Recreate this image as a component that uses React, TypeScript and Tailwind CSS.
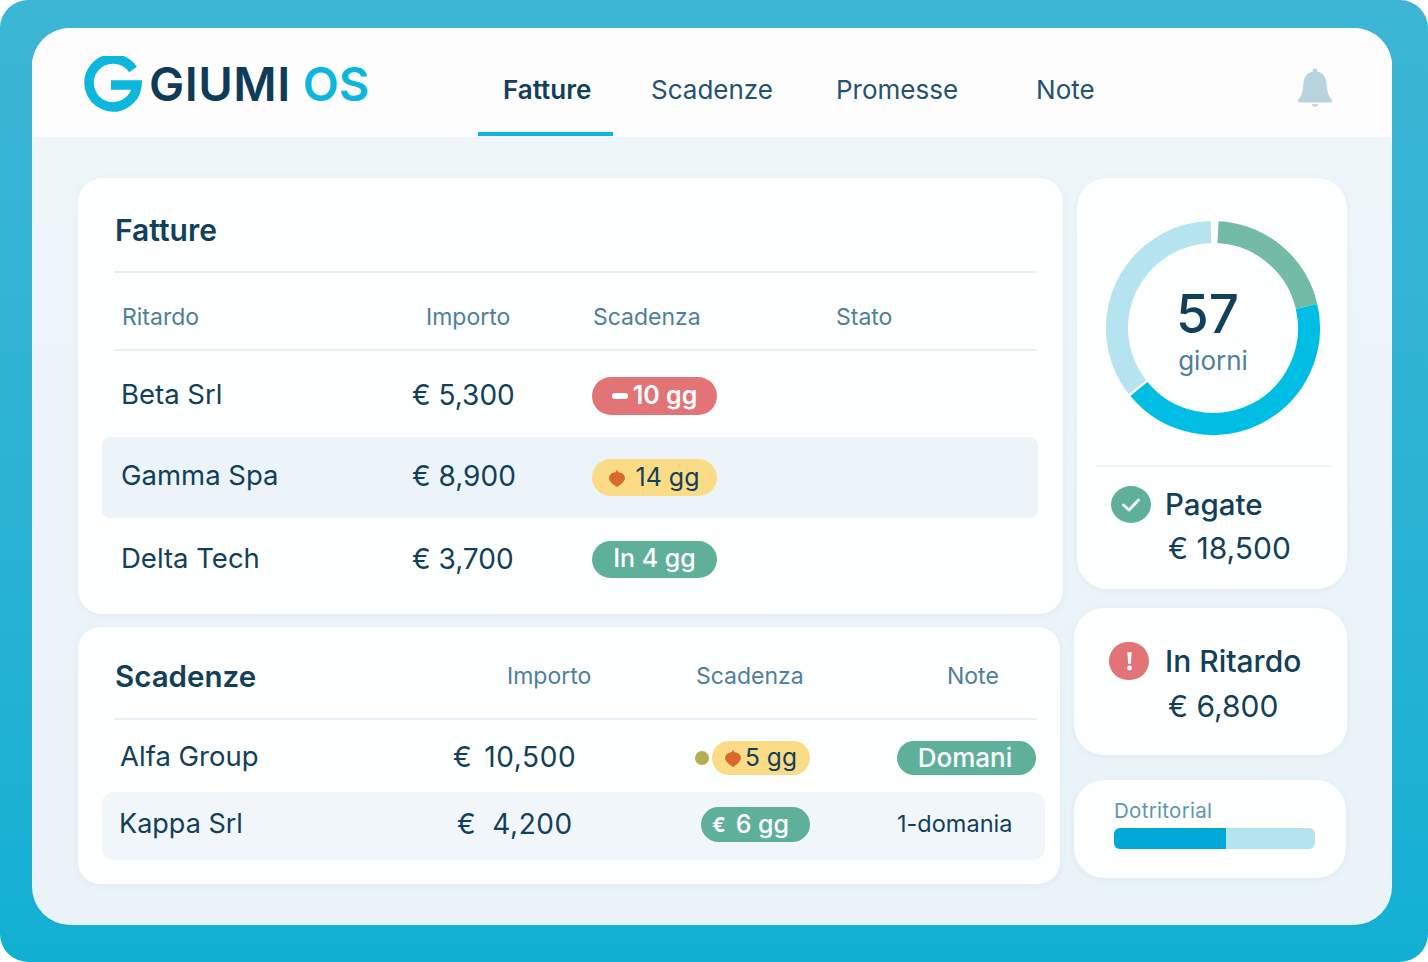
import React from "react";

const dark = "text-[#123f5a]";

function polar(a: number, r: number) {
  const t = ((a - 90) * Math.PI) / 180;
  return [108 + r * Math.cos(t), 108 + r * Math.sin(t)];
}
function arc(a0: number, a1: number, r = 96) {
  const [x0, y0] = polar(a0, r);
  const [x1, y1] = polar(a1, r);
  return `M${x0} ${y0}A${r} ${r} 0 ${a1 - a0 > 180 ? 1 : 0} 1 ${x1} ${y1}`;
}

function Flame({ className }: { className: string }) {
  return (
    <svg viewBox="0 0 16 18" className={className}>
      <path d="M8 0C8 2 9.500 3.200 11 3.600C14 4.400 16 6.500 16 9.200C16 12 12 15.500 8 18C4 15.500 0 12 0 9.200C0 6.500 2 4.400 5 3.600C6.500 3.200 8 2 8 0Z" fill="#d9692e" />
    </svg>
  );
}

function Pill({ className, children }: { className: string; children: React.ReactNode }) {
  return <div className={`flex items-center justify-center rounded-full ${className}`}>{children}</div>;
}

export default function App() {
  return (
    <div className="h-[962px] w-[1428px] overflow-hidden bg-white font-['Inter',sans-serif]">
      <div className="h-[962px] w-[1428px] rounded-[28px] bg-gradient-to-b from-[#3cb6d4] to-[#10b0d3] pb-[37px] pl-[32px] pr-[36px] pt-[28px]">
        <div className="flex h-[897px] w-[1360px] flex-col overflow-hidden rounded-[38px] bg-gradient-to-b from-[#eef6fa] to-[#e9f3f8]">
          {/* header */}
          <header className="flex h-[109px] shrink-0 bg-[#fdfdfe]">
            <div className="flex w-[446px] shrink-0 items-start pl-[52px] pt-[28px]">
              <svg viewBox="0 0 58 58" className="h-[58px] w-[58px] shrink-0">
                <path d="M49 13.500 A24 24 0 1 0 53 29 H27" fill="none" stroke="#0cb6dd" strokeWidth="9.500" />
              </svg>
              <span className="ml-[7px] mt-[5px] text-[47px] font-semibold leading-[46px] tracking-[0.5px] text-[#0e3c58]">GIUMI</span>
              <span className="ml-[12px] mt-[5px] text-[47px] font-semibold leading-[46px] text-[#0cb6dd]">OS</span>
            </div>
            <nav className="flex h-[108px] text-[26px] leading-[32px] text-[#24536e]">
              <div className="w-[135px] border-b-4 border-[#0fb5dc] pl-[25px] pt-[46px] font-semibold text-[#123f5a]">Fatture</div>
              <div className="ml-[38px] pt-[46px]">Scadenze</div>
              <div className="ml-[63px] pt-[46px]">Promesse</div>
              <div className="ml-[78px] pt-[46px]">Note</div>
            </nav>
            <div className="ml-auto mr-[59px] pt-[40px]">
              <svg viewBox="0 0 36 40" className="h-[40px] w-[36px]">
                <circle cx="18" cy="3" r="2.400" fill="#b9d3df" />
                <path d="M18 3.500C10 3.500 7 9 6.500 15C6 22 5 28 1.500 31.500C0.500 33 1 34.500 3 34.500H33C35 34.500 35.500 33 34.500 31.500C31 28 30 22 29.500 15C29 9 26 3.500 18 3.500Z" fill="#b9d3df" />
                <path d="M14.500 36.200H21.500C21 39.500 15 39.500 14.500 36.200Z" fill="#b9d3df" />
              </svg>
            </div>
          </header>

          {/* body */}
          <main className="flex items-start pl-[46px] pt-[41px]">
            <div className="flex w-[985px] shrink-0 flex-col gap-[13px]">
              {/* Fatture */}
              <section className="h-[436px] rounded-[24px] bg-[#fdfefe] pl-[36px] pr-[26px] shadow-[0_1px_6px_rgba(120,170,200,0.10)]">
                <h2 className={`flex h-[95px] items-center border-b-2 border-[#e6f0f6] pl-[1px] pt-[12px] text-[30px] font-semibold ${dark}`}>Fatture</h2>
                <div className="grid h-[78px] grid-cols-[304px_167px_243px_1fr] items-center border-b-2 border-[#e6f0f6] pl-[8px] pt-[12px] text-[23px] text-[#4f7f99]">
                  <div>Ritardo</div>
                  <div>Importo</div>
                  <div>Scadenza</div>
                  <div>Stato</div>
                </div>
                <div className={`grid h-[86px] grid-cols-[291px_180px_1fr] items-center pl-[7px] pt-[1px] ${dark}`}>
                  <div className="text-[27.5px]">Beta Srl</div>
                  <div className="text-[28px]">€ 5,300</div>
                  <Pill className="mt-[2px] h-[38px] w-[125px] gap-[5px] bg-[#e27376] text-[25px] font-semibold text-white">
                    <span className="h-[6px] w-[16px] rounded-[3px] bg-white" />
                    <span>10 gg</span>
                  </Pill>
                </div>
                <div className={`-ml-[12px] -mr-[1px] grid h-[81px] grid-cols-[291px_180px_1fr] items-center rounded-[8px] bg-[#ecf4f9] pl-[19px] ${dark}`}>
                  <div className="-mt-[3px] text-[27.5px]">Gamma Spa</div>
                  <div className="-mt-[3px] text-[28px]">€ 8,900</div>
                  <Pill className="h-[37px] w-[125px] gap-[10px] bg-[#fbdc86] text-[25px]">
                    <Flame className="h-[18px] w-[16px]" />
                    <span>14 gg</span>
                  </Pill>
                </div>
                <div className={`grid h-[82px] grid-cols-[291px_180px_1fr] items-center pl-[7px] ${dark}`}>
                  <div className="text-[27.5px]">Delta Tech</div>
                  <div className="text-[28px]">€ 3,700</div>
                  <Pill className="h-[37px] w-[125px] bg-[#5fb09a] text-[25px] font-medium text-white">In 4 gg</Pill>
                </div>
              </section>

              {/* Scadenze */}
              <section className="h-[257px] w-[982px] rounded-[22px] bg-[#fdfefe] pl-[36px] shadow-[0_1px_6px_rgba(120,170,200,0.10)]">
                <div className="mr-[23px] grid h-[93px] grid-cols-[393px_189px_251px_1fr] items-center border-b-2 border-[#e6f0f6] pt-[8px] text-[23px] text-[#4f7f99]">
                  <h2 className={`pl-[1px] text-[29.5px] font-semibold ${dark}`}>Scadenze</h2>
                  <div>Importo</div>
                  <div>Scadenza</div>
                  <div>Note</div>
                </div>
                <div className={`flex h-[72px] items-center pl-[6px] pt-[3px] ${dark}`}>
                  <div className="-mt-[2px] w-[333px] text-[27.5px]">Alfa Group</div>
                  <div className="-mt-[2px] w-[242px] text-[28px] tracking-[0.6px]">
                    <span className="mr-[12px]">€</span>10,500
                  </div>
                  <span className="h-[14px] w-[14px] rounded-full bg-[#b5ad55]" />
                  <Pill className="ml-[3px] h-[34px] w-[98px] gap-[4px] bg-[#fbdc86] text-[24.5px]">
                    <Flame className="h-[18px] w-[16px]" />
                    <span>5 gg</span>
                  </Pill>
                  <Pill className="ml-[87px] h-[34px] w-[139px] bg-[#5fb09a] pr-[3px] text-[26px] font-medium text-white">Domani</Pill>
                </div>
                <div className={`-ml-[12px] flex h-[68px] w-[943px] items-center rounded-[12px] bg-[#f0f6fa] pb-[3px] pl-[17px] ${dark}`}>
                  <div className="-mt-[1px] w-[338px] text-[27px]">Kappa Srl</div>
                  <div className="-mt-[1px] w-[244px] text-[28px] tracking-[0.6px]">
                    <span className="mr-[16px]">€</span>4,200
                  </div>
                  <Pill className="h-[35px] w-[109px] justify-start gap-[10px] bg-[#5fb09a] pl-[11px] text-[25px] font-medium text-white">
                    <span className="text-[20px] font-bold">€</span>
                    <span>6 gg</span>
                  </Pill>
                  <div className="-mt-[1px] ml-[87px] text-[23.5px]">1-domania</div>
                </div>
              </section>
            </div>

            {/* right column */}
            <div className="flex w-[273px] shrink-0 flex-col">
              <section className="ml-[14px] mt-0 h-[411px] w-[270px] rounded-[30px] bg-[#fdfefe] pl-[19px] pr-[15px] shadow-[0_1px_6px_rgba(120,170,200,0.10)]">
                <div className="relative ml-[9px] mt-[42px] h-[216px] w-[216px]">
                  <svg viewBox="0 0 216 216" className="h-[216px] w-[216px]">
                    <g fill="none" strokeWidth="22">
                      <path d={arc(3, 77)} stroke="#74bba7" />
                      <path d={arc(77, 230.500)} stroke="#00bde4" />
                      <path d={arc(232, 358.800)} stroke="#b5e4f0" />
                    </g>
                  </svg>
                  <div className="absolute inset-0 flex flex-col items-center">
                    <div className={`-ml-[11px] mt-[64px] text-[53px] font-medium leading-[60px] ${dark}`}>57</div>
                    <div className="mt-[1px] text-[26px] leading-[32px] text-[#4f7f99]">giorni</div>
                  </div>
                </div>
                <div className="mt-[29px] border-t-2 border-[#eef4f8] pt-[18px]">
                  <div className={`flex items-center pl-[15px] text-[29.5px] font-medium leading-[38px] ${dark}`}>
                    <svg viewBox="0 0 40 37" className="mr-[14px] h-[37px] w-[40px]">
                      <ellipse cx="20" cy="18.500" rx="20" ry="18.500" fill="#5fb09a" />
                      <path d="M12.500 19L18 24L27.500 14" fill="none" stroke="white" strokeWidth="2.800" strokeLinecap="round" strokeLinejoin="round" />
                    </svg>
                    Pagate
                  </div>
                  <div className={`mt-[6px] pl-[72px] text-[30px] leading-[38px] ${dark}`}>€ 18,500</div>
                </div>
              </section>

              <section className="ml-[11px] mt-[19px] h-[147px] w-[273px] rounded-[30px] bg-[#fdfefe] pl-[35px] pt-[33px] shadow-[0_1px_6px_rgba(120,170,200,0.10)]">
                <div className={`flex items-center text-[30px] font-medium leading-[40px] ${dark}`}>
                  <div className="mr-[16px] flex h-[38px] w-[40px] items-center justify-center rounded-full bg-[#e27376]">
                    <svg viewBox="0 0 8 24" className="h-[22px] w-[7px]">
                      <path d="M1.500 2H6.500L5.500 15H2.500Z" fill="white" />
                      <circle cx="4" cy="20" r="2.800" fill="white" />
                    </svg>
                  </div>
                  In Ritardo
                </div>
                <div className={`mt-[6px] pl-[59px] text-[30px] leading-[38px] ${dark}`}>€ 6,800</div>
              </section>

              <section className="ml-[11px] mt-[25px] h-[98px] w-[272px] rounded-[30px] bg-[#fdfefe] pl-[40px] pt-[18px] shadow-[0_1px_6px_rgba(120,170,200,0.10)]">
                <div className="text-[20.5px] leading-[25px] tracking-[0.3px] text-[#6196af]">Dotritorial</div>
                <div className="mt-[5px] flex h-[21px] w-[201px] overflow-hidden rounded-[6px] bg-[#b5e4f0]">
                  <div className="h-full w-[112px] bg-[#00a9d8]" />
                </div>
              </section>
            </div>
          </main>
        </div>
      </div>
    </div>
  );
}
